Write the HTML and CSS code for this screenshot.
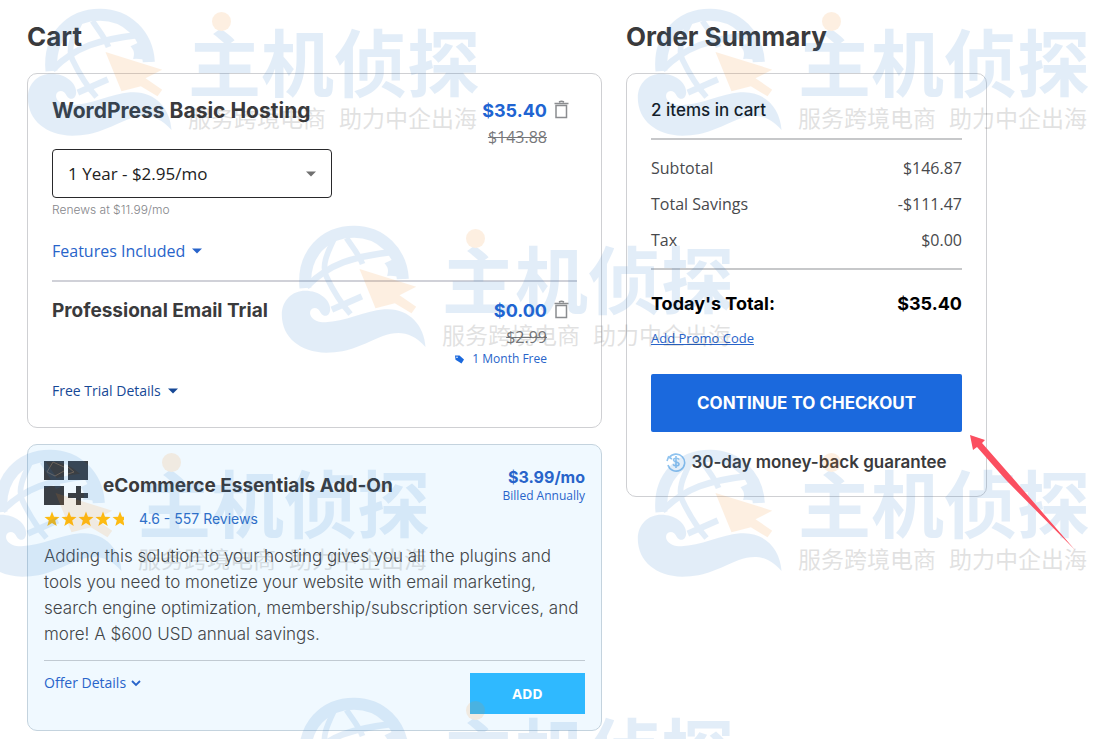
FILE: index.html
```html
<!DOCTYPE html>
<html lang="en">
<head>
<meta charset="utf-8">
<title>Cart</title>
<link rel="stylesheet" href="styles.css">
</head>
<body>
<svg class="defs" aria-hidden="true">
  <symbol id="trash" viewBox="0 0 15 19">
    <path d="M0.5 3.500h14M5 2q2.500-1.300 5 0M2 5.500h10.500v12h-10.500z" fill="none" stroke="#8b8d90" stroke-width="1.500"/>
  </symbol>
  <symbol id="caret" viewBox="0 0 10 6"><path d="M0 .5h10L5 5.500z" fill="currentColor"/></symbol>
  <symbol id="star" viewBox="0 0 16 16"><path d="M8 .5l2 5.200 5.500.3-4.300 3.500 1.500 5.500L8 11.900 3.300 15l1.500-5.500L.5 6 6 5.700z" fill="#fdbb12"/></symbol>
  <symbol id="mark" viewBox="80 20 440 390">
    <g fill="none" stroke="#2a7acb">
      <path d="M153 212C143 110 210 43 299 43c80 0 141 60 146 142" stroke-width="36"/>
      <path d="M238 66c-20 42-38 80-22 112 20 42 42 78 72 112M276 62c14 22 38 50 48 78" stroke-width="17"/>
      <path d="M156 208c70-70 140-90 256-104M232 277l90-40" stroke-width="19"/>
    </g>
    <path d="M398 176c5-18 3-25-8-38l34-16 32 63q-38-12-58-9z" fill="#2a7acb"/>
    <path d="M82 292c0-44 32-72 70-72 42 0 76 26 75 57-2 22-20 23-28 10-6-16-22-20-30-9-7 12 1 28 24 35 62 10 130-32 196-37 72-6 120 46 124 113-42-48-84-49-128-33-60 24-98 50-170 50-78-2-133-46-133-114z" fill="#2a7acb"/>
    <path d="M315 155l170 53-50 26 50 34-14 20-50-30-58 15z" fill="#f58a1f"/>
  </symbol>
</svg>

<main class="page">
  <section class="cart">
    <h1 class="heading">Cart</h1>
    <div class="card">
      <article class="item">
        <div class="item-main">
          <h2 class="item-title item-title-lg">WordPress Basic Hosting</h2>
          <div class="term">
            <select class="term-select" aria-label="Billing term"><option>1 Year - $2.95/mo</option></select>
            <svg class="term-caret" aria-hidden="true"><use href="#caret"/></svg>
          </div>
          <p class="renews">Renews at $11.99/mo</p>
          <button class="toggle toggle-lg" type="button">Features Included <svg class="caret"><use href="#caret"/></svg></button>
        </div>
        <div class="item-side">
          <div class="prices"><strong class="price">$35.40</strong><s class="was">$143.88</s></div>
          <button class="remove" type="button" aria-label="Remove WordPress Basic Hosting"><svg class="trash"><use href="#trash"/></svg></button>
        </div>
      </article>
      <article class="item item-trial">
        <div class="item-main">
          <h2 class="item-title">Professional Email Trial</h2>
          <button class="toggle toggle-trial" type="button">Free Trial Details <svg class="caret"><use href="#caret"/></svg></button>
        </div>
        <div class="item-side">
          <div class="prices"><strong class="price">$0.00</strong><s class="was">$2.99</s>
            <span class="free"><svg class="tag" viewBox="0 0 10 9" aria-hidden="true"><path d="M0 .5h4.500L9 4.500 6.500 8.500 .5 4.800z" fill="#1b69dd"/><circle cx="2" cy="2.300" r=".8" fill="#fff"/></svg>1 Month Free</span>
          </div>
          <button class="remove" type="button" aria-label="Remove Professional Email Trial"><svg class="trash"><use href="#trash"/></svg></button>
        </div>
      </article>
    </div>

    <article class="addon">
      <header class="addon-head">
        <svg class="addon-icon" viewBox="0 0 44 44" aria-hidden="true">
          <path d="M0 0h20v19H0zM24 0h20v19H24zM0 25h20v19H0zM32 25h5v7h7v5h-7v7h-5v-7h-8v-5h8z" fill="#3a3f45"/>
          <path d="M3 11L9 1l11 5M24 6l6 5-6 2M20 10l-9 5-8-4" fill="none" stroke="#6b625a"/>
        </svg>
        <h2 class="addon-title">eCommerce Essentials Add-On</h2>
        <div class="addon-price"><strong>$3.99/mo</strong><span>Billed Annually</span></div>
      </header>
      <div class="rating">
        <span class="stars" role="img" aria-label="4.6 out of 5 stars">
          <svg><use href="#star"/></svg><svg><use href="#star"/></svg><svg><use href="#star"/></svg><svg><use href="#star"/></svg><svg class="star-part"><use href="#star"/></svg>
        </span>
        <span>4.6 - 557 Reviews</span>
      </div>
      <p class="addon-text">Adding this solution to your hosting gives you all the plugins and tools you need to monetize your website with email marketing, search engine optimization, membership/subscription services, and more! A $600 USD annual savings.</p>
      <footer class="addon-foot">
        <button class="toggle offer" type="button">Offer Details <svg class="chevron" viewBox="0 0 10 7"><path d="M1 1l4 4 4-4" fill="none" stroke="currentColor" stroke-width="1.800"/></svg></button>
        <button class="add" type="button">ADD</button>
      </footer>
    </article>
  </section>

  <section class="order">
    <h1 class="heading">Order Summary</h1>
    <div class="card">
      <p class="count">2 items in cart</p>
      <dl class="lines">
        <div class="line"><dt>Subtotal</dt><dd>$146.87</dd></div>
        <div class="line"><dt>Total Savings</dt><dd>-$111.47</dd></div>
        <div class="line"><dt>Tax</dt><dd>$0.00</dd></div>
      </dl>
      <div class="total"><span>Today's Total:</span><span>$35.40</span></div>
      <a class="promo" href="#promo">Add Promo Code</a>
      <button class="checkout" type="button">CONTINUE TO CHECKOUT</button>
      <p class="guarantee">
        <svg class="coin" viewBox="0 0 20 20" aria-hidden="true"><g fill="none" stroke="#8fc3ef" stroke-width="1.600"><path d="M3 6a8.500 8.500 0 1 1-1 7M1 9l1.500-4L6 7"/><path d="M13 7.500c-.5-1.500-5.500-1.800-5.500.5s5.500 1.500 5.500 4-5 2.200-6 .3M10 4v12"/></g></svg>
        30-day money-back guarantee
      </p>
    </div>
  </section>
</main>

<div class="overlay" aria-hidden="true">
  <div class="wm wm-a"><svg class="wm-mark"><use href="#mark"/></svg><div class="wm-name">主机侦探<i class="wm-dot"></i></div><div class="wm-sub"><span>服务跨境电商</span><span>助力中企出海</span></div></div>
  <div class="wm wm-b"><svg class="wm-mark"><use href="#mark"/></svg><div class="wm-name">主机侦探<i class="wm-dot"></i></div><div class="wm-sub"><span>服务跨境电商</span><span>助力中企出海</span></div></div>
  <div class="wm wm-c"><svg class="wm-mark"><use href="#mark"/></svg><div class="wm-name">主机侦探<i class="wm-dot"></i></div><div class="wm-sub"><span>服务跨境电商</span><span>助力中企出海</span></div></div>
  <div class="wm wm-d"><svg class="wm-mark"><use href="#mark"/></svg><div class="wm-name">主机侦探<i class="wm-dot"></i></div><div class="wm-sub"><span>服务跨境电商</span><span>助力中企出海</span></div></div>
  <div class="wm wm-e"><svg class="wm-mark"><use href="#mark"/></svg><div class="wm-name">主机侦探<i class="wm-dot"></i></div><div class="wm-sub"><span>服务跨境电商</span><span>助力中企出海</span></div></div>
  <div class="wm wm-f"><svg class="wm-mark"><use href="#mark"/></svg><div class="wm-name">主机侦探<i class="wm-dot"></i></div></div>
  <svg class="pointer" viewBox="0 0 106 116"><path d="M0 0l15 5-3 3 29 33 64 74-69-70L7 12l-4 3z" fill="#fb4f60"/></svg>
</div>
</body>
</html>
```
FILE: styles.css
```css
* { box-sizing: border-box; }
body {
  position: relative;
  min-height: 100vh;
  margin: 0;
  background: #fff;
  color: #3a3a3c;
  font-family: "Open Sans", sans-serif;
  font-size: 16px;
}
h1, h2, p, dl, dd { margin: 0; }
button { padding: 0; border: 0; background: none; font: inherit; cursor: pointer; }
svg { flex: none; }
.defs { position: absolute; width: 0; height: 0; }

.page {
  display: grid;
  grid-template-columns: 575fr 361fr;
  gap: 24px;
  align-items: start;
  padding: 20px 112px 8px 27px;
}
.heading { margin-bottom: 19px; font: 700 26px/34px Inter, sans-serif; }
.card { padding: 24px; border: 1px solid #cfd0d3; border-radius: 10px; }

.item { display: flex; justify-content: space-between; padding-bottom: 17px; border-bottom: 2px solid #d0d1d8; }
.item-trial { padding: 16px 0 0; border: 0; }
.item-title { font: 700 19px/26px Inter, sans-serif; }
.item-title-lg { font-size: 21px; }
.term { position: relative; width: 280px; margin-top: 25px; }
.term-select {
  display: block;
  width: 100%;
  height: 49px;
  padding: 0 15px;
  border: 1px solid #29292b;
  border-radius: 4px;
  background: #fff;
  color: #222;
  font: 17px "Open Sans", sans-serif;
  appearance: none;
}
.term-caret { position: absolute; top: 22px; right: 16px; width: 10px; height: 6px; color: #707070; }
.renews { margin-top: 4px; color: #85868a; font: 300 12px/16px Inter, sans-serif; }
.toggle { display: flex; align-items: center; gap: 7px; color: #2864ca; line-height: 24px; }
.toggle-lg { margin-top: 21px; }
.toggle-trial { margin-top: 55px; color: #164896; font-size: 14px; }
.caret { width: 10px; height: 6px; }
.item-side { display: flex; align-items: flex-start; gap: 7px; padding-right: 8px; }
.prices { display: flex; flex-direction: column; align-items: flex-end; line-height: 26px; }
.price { color: #2064d2; font: 700 18px/26px Inter, sans-serif; }
.was { color: #77787b; }
.free { display: flex; align-items: center; gap: 7px; color: #2864ca; font-size: 12px; line-height: 18px; }
.tag { width: 10px; height: 9px; }
.remove { display: block; padding-top: 2px; }
.trash { display: block; width: 15px; height: 19px; }

.addon { margin-top: 16px; padding: 16px; border: 1px solid #c4d3de; border-radius: 10px; background: #f0f9ff; }
.addon-head { display: flex; gap: 15px; }
.addon-icon { width: 44px; height: 44px; }
.addon-title { flex: 1; padding-top: 12px; font: 700 19px/26px Inter, sans-serif; }
.addon-price { display: flex; flex-direction: column; align-items: flex-end; padding-top: 6px; color: #2864ca; font-size: 12px; line-height: 18px; }
.addon-price strong { font: 700 16px/20px Inter, sans-serif; }
.rating { display: flex; align-items: center; gap: 11px; margin-top: 4px; color: #2f6fc8; font: 14px/20px Inter, sans-serif; }
.stars { display: flex; gap: 1px; }
.stars svg { width: 16px; height: 16px; }
.stars .star-part { clip-path: inset(0 4px 0 0); }
.addon-text { margin-top: 14px; padding-bottom: 13px; border-bottom: 1px solid #c1cad2; color: #424548; font: 300 17px/26px Inter, sans-serif; }
.addon-foot { display: flex; align-items: flex-start; justify-content: space-between; padding-top: 12px; }
.offer { gap: 5px; font-size: 14px; line-height: 20px; }
.chevron { width: 10px; height: 7px; }
.add { width: 115px; height: 41px; background: #2fb9ff; color: #fff; font: 700 14px "Open Sans", sans-serif; }

.count { padding-bottom: 16px; border-bottom: 2px solid #c7c8ca; color: #111; font: 500 17px/24px Inter, sans-serif; }
.lines { padding: 10px 0; border-bottom: 2px solid #c7c8ca; color: #48494c; line-height: 36px; }
.line { display: flex; justify-content: space-between; }
.total { display: flex; justify-content: space-between; padding-top: 20px; color: #000; font: 700 18px/28px Inter, sans-serif; }
.promo { display: block; width: max-content; margin-top: 10px; color: #2864ca; font-size: 13px; line-height: 20px; }
.checkout { display: block; width: 100%; height: 58px; margin-top: 26px; border-radius: 2px; background: #1b69dd; color: #fff; font: 700 17px Inter, sans-serif; }
.guarantee { display: flex; align-items: center; justify-content: center; gap: 5px; margin-top: 20px; font: 600 17px/20px Inter, sans-serif; }
.coin { width: 20px; height: 20px; }

.overlay { position: absolute; inset: 0; overflow: hidden; pointer-events: none; }
.wm { position: absolute; width: 460px; height: 132px; opacity: .13; font-family: "Noto Sans CJK SC", sans-serif; }
.wm-a { left: 27px; top: 7px; }
.wm-b { left: 637px; top: 7px; }
.wm-c { left: 281px; top: 224px; }
.wm-d { left: -23px; top: 448px; }
.wm-e { left: 637px; top: 448px; }
.wm-f { left: 281px; top: 696px; }
.wm-mark { position: absolute; left: 0; top: 0; width: 147px; height: 130px; }
.wm-name { position: absolute; left: 161px; top: 16px; color: #2a7acb; font-size: 73px; font-weight: 700; line-height: 72px; white-space: nowrap; }
.wm-dot { position: absolute; left: 24px; top: -11px; width: 19px; height: 19px; border-radius: 50%; background: #f58a1f; }
.wm-sub { position: absolute; left: 161px; top: 94px; display: flex; gap: 13px; color: #222; font-size: 23px; line-height: 32px; white-space: nowrap; }
.pointer { position: absolute; left: 970px; top: 435px; width: 106px; height: 116px; }
```
